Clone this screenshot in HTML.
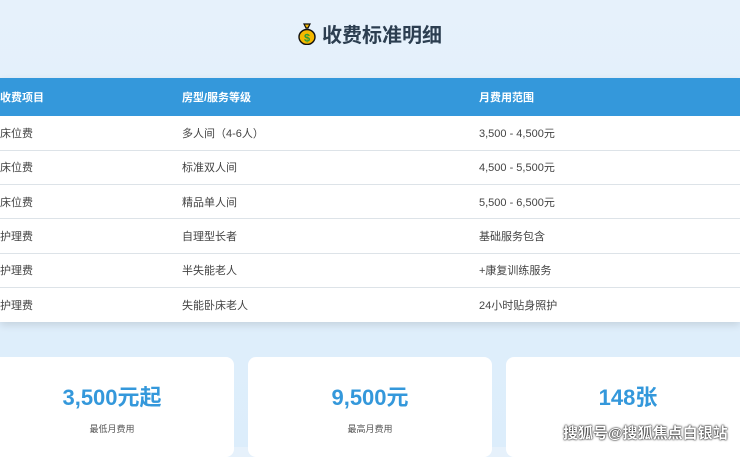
<!DOCTYPE html>
<html><head><meta charset="utf-8"><style>
*{margin:0;padding:0;box-sizing:border-box}
body{width:740px;height:447px;overflow:hidden;background:linear-gradient(180deg,#e6f1fb 0%,#dcedfb 100%);font-family:"Liberation Sans","Noto Sans CJK SC",sans-serif;position:relative}
.title{position:absolute;top:22px;left:0;width:740px;text-align:center;font-size:20px;font-weight:bold;color:#2c3e50;line-height:28px}
.title span.ic{display:inline-block;width:18px;height:22px;vertical-align:-3px;margin-right:6px}
table{position:absolute;top:78px;left:0;width:740px;border-collapse:collapse;background:#fff;box-shadow:0 3px 8px rgba(0,0,0,.12);font-size:11px;color:#444}
th{background:#3498db;color:#fff;height:38px;text-align:left;font-weight:bold;font-size:11px}
td{height:34.3px;border-bottom:1px solid #dde3e8}
tr:last-child td{border-bottom:none}
.c1{width:182px;padding-left:0}.c2{width:297px}
.card{position:absolute;top:357px;height:100px;background:#fff;border-radius:8px;text-align:center}
.card .v{margin-top:26px;font-size:22px;font-weight:bold;color:#3498db;line-height:30px}
.card .l{margin-top:9px;font-size:9px;color:#555}
.wm{position:absolute;left:563px;top:422px;font-size:15px;color:#fff;font-weight:bold;text-shadow:0 0 2px #000,0 0 1px #000}
</style></head><body>
<div class="title"><span class="ic"><svg width="18" height="22" viewBox="0 0 18 22"><path d="M6 1h6l-2 4h-2z" fill="#f2b705" stroke="#111" stroke-width="1.2"/><ellipse cx="9" cy="14" rx="8" ry="7.5" fill="#f5b800" stroke="#111" stroke-width="1.4"/><text x="9" y="18.5" font-size="11" font-weight="bold" text-anchor="middle" fill="#2a9d3a" font-family="Liberation Sans">$</text></svg></span>收费标准明细</div>
<table>
<tr><th class="c1">收费项目</th><th class="c2">房型/服务等级</th><th>月费用范围</th></tr>
<tr><td class="c1">床位费</td><td>多人间（4-6人）</td><td>3,500 - 4,500元</td></tr>
<tr><td class="c1">床位费</td><td>标准双人间</td><td>4,500 - 5,500元</td></tr>
<tr><td class="c1">床位费</td><td>精品单人间</td><td>5,500 - 6,500元</td></tr>
<tr><td class="c1">护理费</td><td>自理型长者</td><td>基础服务包含</td></tr>
<tr><td class="c1">护理费</td><td>半失能老人</td><td>+康复训练服务</td></tr>
<tr><td class="c1">护理费</td><td>失能卧床老人</td><td>24小时贴身照护</td></tr>
</table>
<div class="card" style="left:-10px;width:244px"><div class="v">3,500元起</div><div class="l">最低月费用</div></div>
<div class="card" style="left:248px;width:244px"><div class="v">9,500元</div><div class="l">最高月费用</div></div>
<div class="card" style="left:506px;width:244px"><div class="v">148张</div><div class="l">&nbsp;</div></div>
<div class="wm">搜狐号@搜狐焦点白银站</div>
</body></html>
